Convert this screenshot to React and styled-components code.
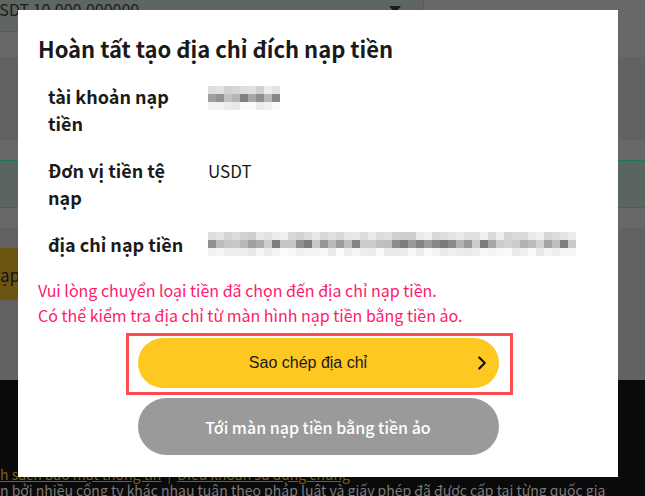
import React from "react";
import styled, { createGlobalStyle } from "styled-components";
import { ChevronRight } from "lucide-react";

const Global = createGlobalStyle`
  html, body { margin: 0; padding: 0; }
  body {
    background: #0a0a0a;
    font-family: "Noto Sans CJK JP", "Noto Sans", sans-serif;
    overflow: hidden;
  }
  * { box-sizing: border-box; }
`;

const Page = styled.div`
  position: relative;
  width: 645px;
  height: 496px;
  overflow: hidden;
  display: flex;
  flex-direction: column;
`;

const Band = styled.div`
  height: ${(p) => p.$h}px;
  background: ${(p) => p.$bg};
  display: flex;
  flex-direction: column;
  padding-top: ${(p) => p.$pt || 0}px;
  flex-shrink: 0;
`;

const SelectBox = styled.div`
  width: 436px;
  height: 36px;
  margin-top: -4px;
  margin-left: -12px;
  background: #5f6561;
  border-right: 1px solid #137a5c;
  border-bottom: 1px solid #137a5c;
  display: flex;
  align-items: flex-start;
  justify-content: space-between;
  padding: 0 22px 0 0;
  font-size: 16px;
  color: #1c1c1c;
  line-height: 26px;
`;

const Caret = styled.span`
  width: 0;
  height: 0;
  border-left: 6px solid transparent;
  border-right: 6px solid transparent;
  border-top: 7px solid #1a1a1a;
  margin-top: 10px;
`;

const InputBox = styled.div`
  height: 48px;
  background: #5c6460;
  border-top: 1px solid #137a5c;
  border-bottom: 1px solid #137a5c;
`;

const OliveButton = styled.div`
  height: 52px;
  width: 300px;
  margin-left: -280px;
  background: #6b5511;
  color: #141414;
  font-size: 17px;
  display: flex;
  align-items: center;
  justify-content: flex-end;
`;

const Footer = styled.div`
  flex: 1;
  background: #0a0a0a;
  padding-top: 86px;
`;

const LinkRow = styled.div`
  display: flex;
  align-items: center;
  gap: 6px;
  font-size: 14px;
  line-height: 16px;
  color: #7a6212;
  white-space: nowrap;
`;

const FooterLink = styled.span`
  text-decoration: underline;
`;

const FooterText = styled.div`
  font-size: 14px;
  line-height: 16px;
  color: #7c7c7c;
  white-space: nowrap;
`;

const Modal = styled.div`
  position: absolute;
  left: 18px;
  top: 10px;
  width: 600px;
  height: 467px;
  background: #ffffff;
  padding: 23px 20px 0 20px;
  display: flex;
  flex-direction: column;
`;

const Title = styled.h2`
  margin: 0;
  font-size: 22px;
  line-height: 30px;
  font-weight: 700;
  color: #1a1a1a;
`;

const InfoList = styled.div`
  margin-top: 20px;
  padding-left: 10px;
  display: flex;
  flex-direction: column;
  gap: 20px;
`;

const InfoRow = styled.div`
  display: grid;
  grid-template-columns: 145px 1fr;
  align-items: start;
  column-gap: 15px;
  font-size: 18px;
  line-height: 27px;
  color: #1a1a1a;
`;

const Label = styled.div`
  font-weight: 700;
`;

const Value = styled.div`
  font-weight: 400;
  font-size: 17px;
`;

const Mosaic = styled.div`
  display: grid;
  grid-template-columns: repeat(${(p) => p.$cols}, ${(p) => p.$cell}px);
  grid-auto-rows: ${(p) => p.$cell}px;
  margin-top: ${(p) => p.$mt || 0}px;
`;

const Cell = styled.span`
  background: ${(p) => p.$c};
`;

const Notice = styled.p`
  margin: 20px 0 0 0;
  font-size: 16px;
  line-height: 25px;
  color: #ff1a6c;
`;

const Actions = styled.div`
  margin-top: 10px;
  width: 361px;
  align-self: center;
  display: flex;
  flex-direction: column;
  gap: 10px;
`;

const Highlight = styled.div`
  position: relative;
  &::after {
    content: "";
    position: absolute;
    left: -12px;
    right: -14px;
    top: -5px;
    bottom: -7px;
    border: 3px solid #ff4a4f;
    pointer-events: none;
  }
`;

const PillButton = styled.button`
  width: 100%;
  height: ${(p) => (p.$primary ? 50 : 57)}px;
  border: none;
  border-radius: 30px;
  background: ${(p) => (p.$primary ? "#fec820" : "#9a9a9a")};
  color: ${(p) => (p.$primary ? "#1a1a1a" : "#ffffff")};
  font-family: ${(p) =>
    p.$primary
      ? '"Liberation Sans", Arial, sans-serif'
      : '"Noto Sans CJK JP", "Noto Sans", sans-serif'};
  font-size: 16px;
  font-weight: ${(p) => (p.$primary ? 400 : 500)};
  display: flex;
  align-items: center;
  padding: ${(p) => (p.$primary ? "0 6px 0 8px" : "0 12px")};
  cursor: pointer;
`;

const ButtonLabel = styled.span`
  flex: 1;
  text-align: center;
`;

function rand(seed) {
  let s = seed;
  return () => {
    s = (s * 9301 + 49297) % 233280;
    return s / 233280;
  };
}

function mosaicColors(cols, seed) {
  const r = rand(seed);
  const rows = [
    [205, 240],
    [120, 215],
    [232, 252],
  ];
  const out = [];
  rows.forEach(([lo, hi]) => {
    for (let i = 0; i < cols; i++) {
      const v = Math.round(lo + r() * (hi - lo));
      out.push(`rgb(${v},${v},${v})`);
    }
  });
  return out;
}

function Blurred({ cols, seed, mt }) {
  const colors = mosaicColors(cols, seed);
  return (
    <Mosaic $cols={cols} $cell={8} $mt={mt}>
      {colors.map((c, i) => (
        <Cell key={i} $c={c} />
      ))}
    </Mosaic>
  );
}

export default function App() {
  return (
    <Page>
      <Global />
      <Band $h={57} $bg="#686868">
        <SelectBox>
          <span>USDT 10.000.000000</span>
          <Caret />
        </SelectBox>
      </Band>
      <Band $h={83} $bg="#626262" />
      <Band $h={88} $bg="#686868" $pt={20}>
        <InputBox />
      </Band>
      <Band $h={152} $bg="#626262" $pt={20}>
        <OliveButton>ạp</OliveButton>
      </Band>
      <Footer>
        <LinkRow>
          <FooterLink>h sách bảo mật thông tin</FooterLink>
          <span>|</span>
          <FooterLink>Điều khoản sử dụng chung</FooterLink>
        </LinkRow>
        <FooterText>
          n bởi nhiều công ty khác nhau tuân theo pháp luật và giấy phép đã được cấp tại từng quốc gia
        </FooterText>
      </Footer>

      <Modal>
        <Title>Hoàn tất tạo địa chỉ đích nạp tiền</Title>
        <InfoList>
          <InfoRow>
            <Label>tài khoản nạp tiền</Label>
            <div>
              <Blurred cols={9} seed={7} mt={3} />
            </div>
          </InfoRow>
          <InfoRow>
            <Label>Đơn vị tiền tệ nạp</Label>
            <Value>USDT</Value>
          </InfoRow>
          <InfoRow>
            <Label>địa chỉ nạp tiền</Label>
            <div>
              <Blurred cols={46} seed={31} mt={1} />
            </div>
          </InfoRow>
        </InfoList>
        <Notice>
          Vui lòng chuyển loại tiền đã chọn đến địa chỉ nạp tiền.
          <br />
          Có thể kiểm tra địa chỉ từ màn hình nạp tiền bằng tiền ảo.
        </Notice>
        <Actions>
          <Highlight>
            <PillButton $primary>
              <ButtonLabel>Sao chép địa chỉ</ButtonLabel>
              <ChevronRight size={22} strokeWidth={2.4} color="#111" />
            </PillButton>
          </Highlight>
          <PillButton>
            <ButtonLabel>Tới màn nạp tiền bằng tiền ảo</ButtonLabel>
          </PillButton>
        </Actions>
      </Modal>
    </Page>
  );
}
